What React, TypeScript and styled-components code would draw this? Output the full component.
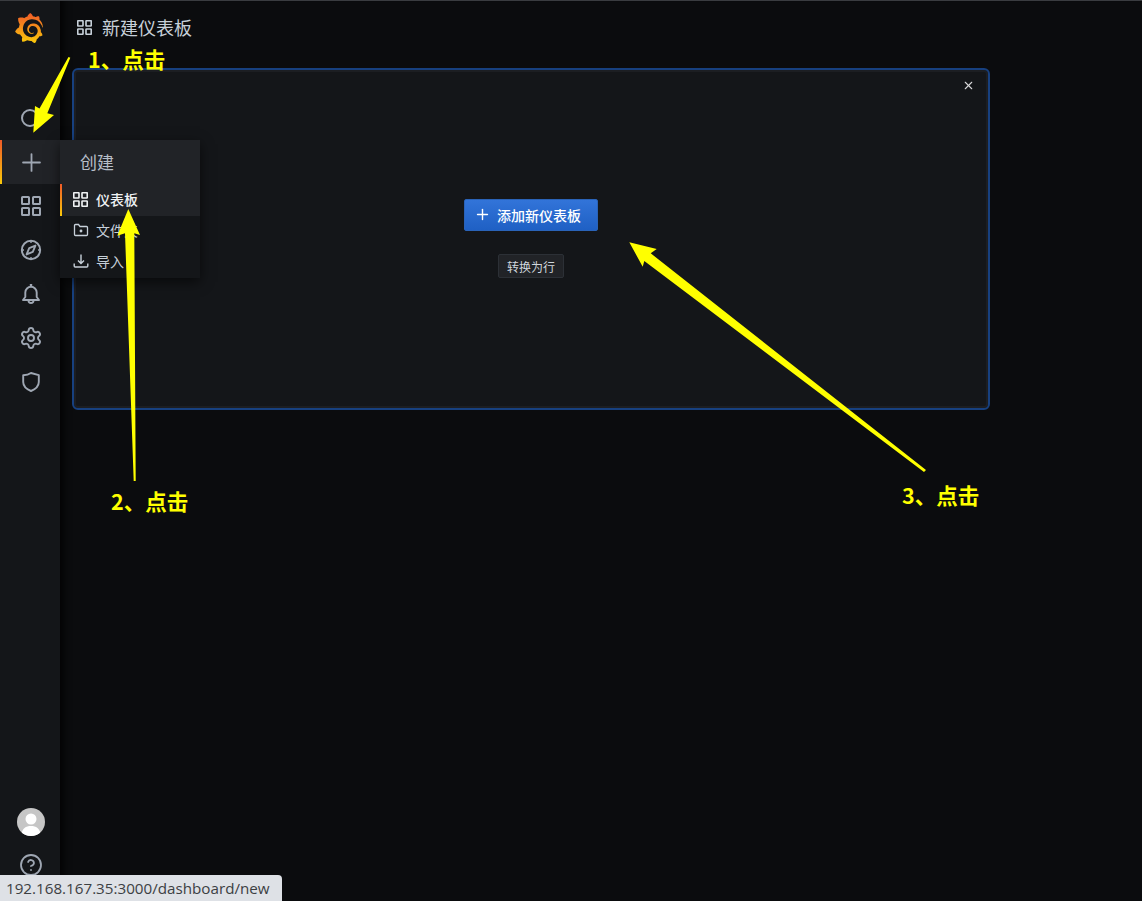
import React from 'react'
import styled, { createGlobalStyle } from 'styled-components'
import { CircleHelp, Plus, Settings, X } from 'lucide-react'
import { SiGrafana } from 'react-icons/si'

const GlobalStyle = createGlobalStyle`
  html, body {
    margin: 0;
    height: 100%;
    background: #0b0c0e;
    overflow: hidden;
  }
  * {
    box-sizing: border-box;
  }
  #root {
    height: 100%;
  }
`

const Page = styled.div`
  position: relative;
  display: flex;
  width: 1142px;
  height: 901px;
  border-top: 1px solid #3a3c40;
  overflow: hidden;
  font-family: 'Noto Sans CJK SC', 'Liberation Sans', sans-serif;
  color: #c7d0d9;
`

const Sidebar = styled.nav`
  flex: 0 0 60px;
  display: flex;
  flex-direction: column;
  background: #141619;
`

const LogoBox = styled.div`
  height: 55px;
  display: flex;
  align-items: center;
  justify-content: center;
  margin-bottom: 40px;
  padding: 0 3px 2px 0;
`

const NavItem = styled.div<{ $active?: boolean }>`
  position: relative;
  height: 44px;
  display: flex;
  align-items: center;
  justify-content: center;
  padding-left: 2px;
  color: #9fa7b3;
  background: ${p => (p.$active ? '#212327' : 'transparent')};

  &::before {
    content: '';
    display: ${p => (p.$active ? 'block' : 'none')};
    position: absolute;
    left: 0;
    top: 0;
    bottom: 0;
    width: 2px;
    background: linear-gradient(#f05a28, #fbca0a);
  }
`

const SearchRing = styled.div`
  width: 18px;
  height: 18px;
  margin-right: 3px;
  border: 2px solid #9fa7b3;
  border-radius: 50%;
`

const SideBottom = styled.div`
  margin-top: auto;
  display: flex;
  flex-direction: column;
  align-items: center;
  gap: 17px;
  padding: 0 0 24px 2px;
`

const Avatar = styled.svg`
  width: 28px;
  height: 28px;
  border-radius: 50%;
`

const Main = styled.main`
  flex: 1;
  padding: 0 0 0 12px;
  box-shadow: inset 12px 0 10px -10px #000;
`

const Header = styled.header`
  height: 55px;
  display: flex;
  align-items: center;
  gap: 10px;
  padding: 0 0 3px 5px;
  font-size: 18px;
  color: #c7d0d9;
`

const Panel = styled.section`
  position: relative;
  width: 918px;
  height: 342px;
  margin-top: 12px;
  padding-top: 129px;
  display: flex;
  flex-direction: column;
  align-items: center;
  gap: 23px;
  background: #141619;
  border: 2px solid #17407f;
  border-radius: 6px;
  box-shadow: inset 0 0 0 2px #1c1e22;
`

const CloseButton = styled.div`
  position: absolute;
  top: 9px;
  right: 13px;
  display: flex;
  color: #d8d9da;
`

const AddButton = styled.button`
  width: 134px;
  height: 32px;
  display: flex;
  align-items: center;
  gap: 6px;
  padding: 0 0 1px 9px;
  background: linear-gradient(#3274d9, #1f60c4);
  border: 1px solid #2a63b8;
  border-radius: 2px;
  color: #fff;
  font-family: inherit;
  font-size: 14px;
  font-weight: 500;
`

const RowButton = styled.button`
  width: 66px;
  height: 24px;
  padding: 0;
  background: #212327;
  border: 1px solid #2c3036;
  border-radius: 2px;
  color: #d0d6dd;
  font-family: inherit;
  font-size: 12px;
`

const Flyout = styled.div`
  position: absolute;
  left: 60px;
  top: 139px;
  width: 140px;
  background: #141619;
  box-shadow: 0 4px 12px rgba(0, 0, 0, 0.6);
`

const FlyoutTitle = styled.div`
  height: 44px;
  display: flex;
  align-items: center;
  padding: 0 0 2px 20px;
  background: #212327;
  font-size: 17px;
  color: #b7bec8;
`

const FlyoutRow = styled.div<{ $active?: boolean }>`
  position: relative;
  height: ${p => (p.$active ? '32px' : '31px')};
  display: flex;
  align-items: center;
  gap: ${p => (p.$active ? '8px' : '7px')};
  padding: 0 0 ${p => (p.$active ? '2px' : '3px')} 13px;
  font-size: 14px;
  font-weight: ${p => (p.$active ? 500 : 400)};
  color: ${p => (p.$active ? '#f0f2f4' : '#c7d0d9')};
  background: ${p => (p.$active ? '#212327' : 'transparent')};

  svg {
    flex: none;
  }

  &::before {
    content: '';
    display: ${p => (p.$active ? 'block' : 'none')};
    position: absolute;
    left: 0;
    top: 0;
    bottom: 0;
    width: 2px;
    background: linear-gradient(#f05a28, #fbca0a);
  }
`

const Arrows = styled.svg`
  position: absolute;
  left: 0;
  top: -1px;
  width: 1142px;
  height: 901px;
  pointer-events: none;
`

const Note = styled.div<{ $x: number; $y: number }>`
  position: absolute;
  left: ${p => p.$x}px;
  top: ${p => p.$y}px;
  font-size: 21.5px;
  line-height: 28px;
  font-weight: 700;
  color: #ffff00;
  white-space: nowrap;
`

const StatusBar = styled.div`
  position: absolute;
  left: 0;
  bottom: 0;
  width: 282px;
  height: 26px;
  padding-left: 6px;
  display: flex;
  align-items: center;
  background: #dee1e6;
  border-top-right-radius: 4px;
  font-family: 'Open Sans', 'Liberation Sans', sans-serif;
  font-size: 15.2px;
  color: #3c4043;
`

const GradientDefs = styled.svg`
  position: absolute;
  width: 0;
  height: 0;
`

const GridIcon = ({ size, stroke = 2 }: { size: number; stroke?: number }) => (
  <svg width={size} height={size} viewBox="0 0 20 20" fill="none" stroke="currentColor" strokeWidth={stroke}>
    <rect x="1" y="1" width="7" height="7" rx="0.6" />
    <rect x="12" y="1" width="7" height="7" rx="0.6" />
    <rect x="1" y="12" width="7" height="7" rx="0.6" />
    <rect x="12" y="12" width="7" height="7" rx="0.6" />
  </svg>
)

const CompassIcon = () => (
  <svg width="24" height="24" viewBox="0 0 24 24" fill="none" stroke="currentColor" strokeWidth="1.9">
    <circle cx="12" cy="12" r="9.2" />
    <path d="M16.4 7.6 13.8 13.8 7.6 16.4 10.2 10.2z" strokeLinejoin="round" />
    <path d="M12 3v2M12 19v2M3 12h2M19 12h2" strokeWidth="1.4" />
  </svg>
)

const BellIcon = () => (
  <svg width="24" height="24" viewBox="0 0 24 24" fill="none" stroke="currentColor" strokeWidth="1.9" strokeLinejoin="round">
    <path d="M6.3 15v-4.5a5.7 5.7 0 0 1 11.4 0V15l2.3 3H4z" />
    <path d="M12 2v2.5" strokeWidth="2.4" />
    <path d="M9.5 18.5a2.5 2.5 0 0 0 5 0" />
  </svg>
)

const ShieldIcon = () => (
  <svg width="24" height="24" viewBox="0 0 24 24" fill="none" stroke="currentColor" strokeWidth="1.9" strokeLinejoin="round">
    <path d="M12 3 19.8 5.2V12c0 4-3 7-7.8 9-4.8-2-7.8-5-7.8-9V5.2C7 5.2 9.8 4.6 12 3z" />
  </svg>
)

const FolderIcon = () => (
  <svg width="16" height="16" viewBox="0 0 16 16" fill="none" stroke="currentColor" strokeWidth="1.3">
    <path d="M1.5 3.5a1 1 0 0 1 1-1h3l1.5 2h6.5a1 1 0 0 1 1 1V12.5a1 1 0 0 1-1 1h-11a1 1 0 0 1-1-1z" />
    <circle cx="8" cy="9" r="0.8" fill="currentColor" />
  </svg>
)

const ImportIcon = () => (
  <svg width="16" height="16" viewBox="0 0 16 16" fill="none" stroke="currentColor" strokeWidth="1.4">
    <path d="M8 1.5v8.5M5 7.5 8 10.5l3-3" />
    <path d="M1.2 10.5V13a1 1 0 0 0 1 1h11.6a1 1 0 0 0 1-1v-2.5" />
  </svg>
)

const App: React.FC = () => (
  <Page>
    <GlobalStyle />
    <GradientDefs>
      <defs>
        <linearGradient id="grafana" x1="0" y1="0" x2="0" y2="1">
          <stop offset="0" stopColor="#f05a28" />
          <stop offset="1" stopColor="#fbca0a" />
        </linearGradient>
      </defs>
    </GradientDefs>

    <Sidebar>
      <LogoBox>
        <SiGrafana size={30} fill="url(#grafana)" />
      </LogoBox>
      <NavItem>
        <SearchRing />
      </NavItem>
      <NavItem $active>
        <Plus size={29} strokeWidth={1.5} />
      </NavItem>
      <NavItem>
        <GridIcon size={20} />
      </NavItem>
      <NavItem>
        <CompassIcon />
      </NavItem>
      <NavItem>
        <BellIcon />
      </NavItem>
      <NavItem>
        <Settings size={24} strokeWidth={1.9} />
      </NavItem>
      <NavItem>
        <ShieldIcon />
      </NavItem>
      <SideBottom>
        <Avatar viewBox="0 0 28 28">
          <rect width="28" height="28" fill="#c6c6c6" />
          <circle cx="14" cy="11" r="5.5" fill="#fff" />
          <path d="M4 28c1-8 5-10 10-10s9 2 10 10z" fill="#fff" />
        </Avatar>
        <CircleHelp size={24} strokeWidth={1.8} color="#9fa7b3" />
      </SideBottom>
    </Sidebar>

    <Main>
      <Header>
        <GridIcon size={15} stroke={2.2} />
        新建仪表板
      </Header>
      <Panel>
        <CloseButton>
          <X size={13} strokeWidth={2} />
        </CloseButton>
        <AddButton>
          <Plus size={17} strokeWidth={2} />
          添加新仪表板
        </AddButton>
        <RowButton>转换为行</RowButton>
      </Panel>
    </Main>

    <Flyout>
      <FlyoutTitle>创建</FlyoutTitle>
      <FlyoutRow $active>
        <GridIcon size={15} stroke={2.2} />
        仪表板
      </FlyoutRow>
      <FlyoutRow>
        <FolderIcon />
        文件夹
      </FlyoutRow>
      <FlyoutRow>
        <ImportIcon />
        导入
      </FlyoutRow>
    </Flyout>

    <Arrows viewBox="0 0 1142 901">
      <polygon points="70.3,57.7 47.3,113.3 54,115 33.3,132.7 35,106 39.5,108.5 68.5,57" fill="#ffff00" />
      <polygon points="135.7,481 134.3,233.3 140,235 128.3,209 117.3,235.7 125,233.3 133.7,481" fill="#ffff00" />
      <polygon points="926,470 650.7,253.3 656.7,249 629.3,242.3 642.7,266.7 644.3,261 924,472" fill="#ffff00" />
    </Arrows>
    <Note $x={88} $y={44}>1、点击</Note>
    <Note $x={111} $y={486}>2、点击</Note>
    <Note $x={902} $y={480}>3、点击</Note>

    <StatusBar>192.168.167.35:3000/dashboard/new</StatusBar>
  </Page>
)

export default App
